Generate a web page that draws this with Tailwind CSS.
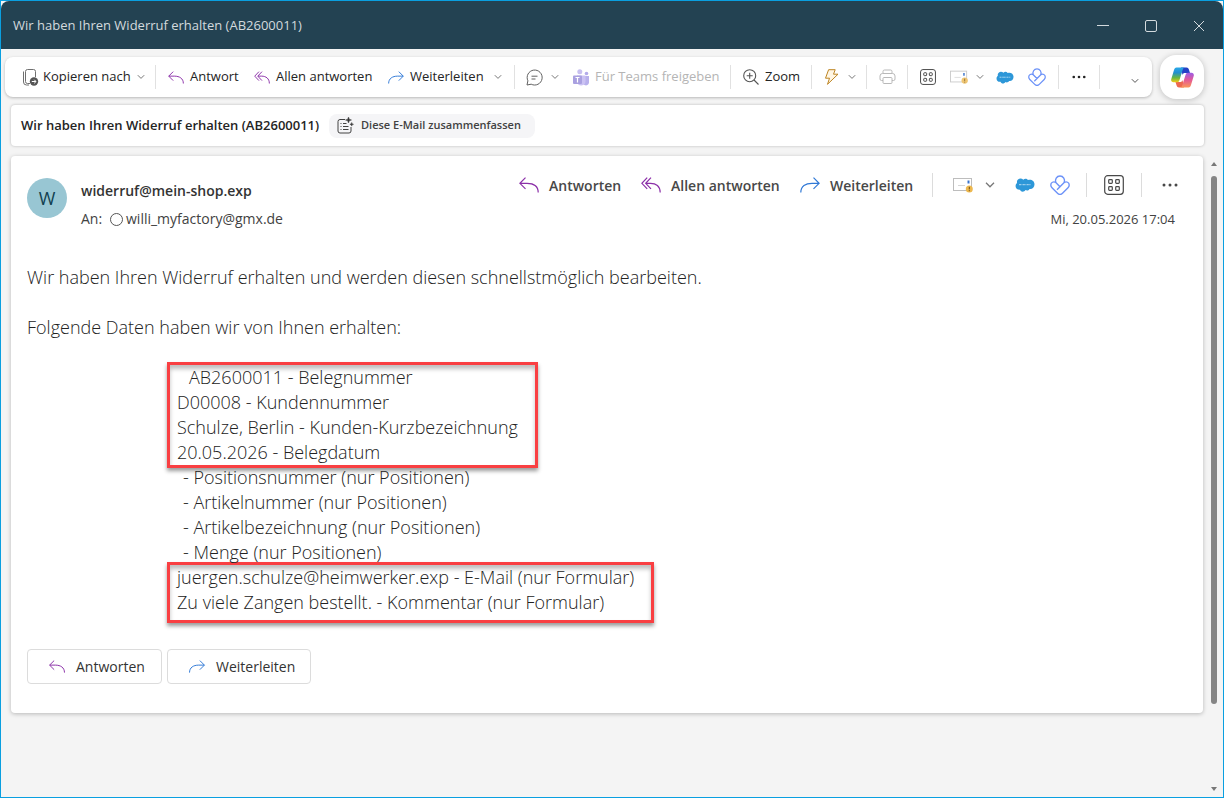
<!DOCTYPE html>
<html lang="de">
<head>
<meta charset="utf-8">
<title>Wir haben Ihren Widerruf erhalten (AB2600011)</title>
<script src="https://cdn.jsdelivr.net/npm/@tailwindcss/browser@4"></script>
</head>
<body class="flex h-screen flex-col overflow-hidden border border-[#0a9fe0] bg-[#f4f4f4] font-['Open_Sans','Noto_Sans',sans-serif] text-[13px] text-[#242424]">
<svg class="hidden" aria-hidden="true">
  <defs>
    <symbol id="chev" viewBox="0 0 8 8"><path d="M.8 2.200 4 5.400l3.200-3.200" fill="none" stroke="currentColor"/></symbol>
    <symbol id="reply" viewBox="0 0 20 16"><path d="M6.500.7.9 6.300l5.600 5.600M1 6.300h7c6.500 0 11.200 3 11.200 9.200" fill="none" stroke="#8b2fa8" stroke-width="1.200"/></symbol>
    <symbol id="replyall" viewBox="0 0 20 16"><path d="M6.200.7.9 6.300l5.300 5.600M10 .7 4.700 6.300 10 11.900M5 6.300h4.500c5.500 0 9.700 3 9.700 9.200" fill="none" stroke="#8b2fa8" stroke-width="1.200"/></symbol>
    <symbol id="fwd" viewBox="0 0 20 16"><path d="M13.500.7l5.600 5.600-5.600 5.600M19 6.300h-7C5.500 6.300.8 9.300.8 15.500" fill="none" stroke="#2f78d6" stroke-width="1.200"/></symbol>
    <symbol id="grid" viewBox="0 0 20 20"><g fill="none" stroke="currentColor" stroke-width="1.200"><rect x=".7" y=".7" width="18.600" height="18.600" rx="3"/><rect x="4.700" y="4.700" width="3.600" height="3.600" rx=".8"/><rect x="11.700" y="4.700" width="3.600" height="3.600" rx=".8"/><rect x="4.700" y="11.700" width="3.600" height="3.600" rx=".8"/><rect x="11.700" y="11.700" width="3.600" height="3.600" rx=".8"/></g></symbol>
    <symbol id="mail" viewBox="0 0 20 16"><rect x=".5" y="1.500" width="18" height="12" fill="#fff" stroke="#bdbdbd"/><path d="M5 8.500h7" stroke="#d5d5d5"/><path d="M14.500 3.500h2v3h-2z" fill="#3973cc"/><circle cx="16.300" cy="12" r="3.500" fill="#edb84f"/><path d="M16.300 9.800v2.600M16.300 13.200v1" stroke="#6b4b10"/></symbol>
    <symbol id="cloud" viewBox="0 0 20 14"><path d="M8.300 1.700c1.500-1.500 3.500-1.200 4.700.4 2.700-1.300 6.500.4 6.500 4.200 0 3.500-2.700 5.200-5 4.600-.9 1.700-2.600 1.900-4 1.200-1.300 2.300-4.700 2.200-5.500-.3C2.500 12.200.5 10.200.6 8.100c0-1.300.6-2.300 1.500-3C.9 1.500 5.500-1.200 8.300 1.700z" fill="#2d97d8"/><path d="M4 6.700h12" stroke="#b5dcf3" stroke-dasharray="2 .5 1 .4"/></symbol>
    <symbol id="clover" viewBox="0 0 20 20"><g fill="none" stroke="#6c92f8" stroke-width="1.400" stroke-linejoin="round"><path d="M5.800 7.500C4.700 4.400 6.600 1 10 1s5.300 3.400 4.200 6.500"/><path d="M10 11.700 5.800 7.500C3.500 6 .8 7.500.8 10c0 1.200.5 2 1.200 2.700l5.500 5.500c1.500 1.500 3.500 1.500 5 0l5.500-5.500c.7-.7 1.200-1.500 1.200-2.700 0-2.500-2.700-4-5-2.500L7 14.700"/></g></symbol>
    <symbol id="dots" viewBox="0 0 16 4"><g fill="currentColor"><circle cx="2" cy="2" r="1.500"/><circle cx="8" cy="2" r="1.500"/><circle cx="14" cy="2" r="1.500"/></g></symbol>
  </defs>
</svg>

<header class="flex h-12 shrink-0 items-center justify-between rounded-t-lg bg-[#234252] pr-[18px] pl-3 text-[#d3dade]">
  <h1 class="pt-0.5 text-[13px]">Wir haben Ihren Widerruf erhalten (AB2600011)</h1>
  <div class="flex items-center gap-9 pt-0.5">
    <button class="size-3" aria-label="Minimieren"><svg class="size-3" viewBox="0 0 12 12"><path d="M0 5.500h12" stroke="currentColor"/></svg></button>
    <button class="size-3" aria-label="Maximieren"><svg class="size-3" viewBox="0 0 12 12"><rect x=".5" y=".5" width="11" height="11" rx="1.500" fill="none" stroke="currentColor"/></svg></button>
    <button class="size-3" aria-label="Schließen"><svg class="size-3" viewBox="0 0 12 12"><path d="M1 1l10 10M11 1 1 11" stroke="currentColor"/></svg></button>
  </div>
</header>

<div class="mt-1.5 mr-[19px] ml-1 flex shrink-0 items-center gap-2">
  <nav class="flex h-10 flex-1 items-center rounded-lg bg-white whitespace-nowrap shadow-[0_1px_3px_rgba(0,0,0,0.25)]" aria-label="Menüband">
    <div class="flex h-6 w-[151px] items-center border-r border-[#e1e1e1] pl-[17px]">
      <button class="flex items-center">
        <svg class="mr-1 size-[17px]" viewBox="0 0 17 17"><g fill="none" stroke="#707070"><path d="M8 14.500H5.500a2 2 0 0 1-2-2v-10a2 2 0 0 1 2-2h6a2 2 0 0 1 2 2V8"/><path d="M1.500 2.500v10.500a3 3 0 0 0 3 3H7"/></g><circle cx="12" cy="12.500" r="4.200" fill="#555"/><path d="M9.800 12.500h4M12.200 10.700l1.800 1.800-1.800 1.800" fill="none" stroke="#fff"/></svg>
        <span class="w-[94px] text-left">Kopieren nach</span>
        <svg class="size-2 text-[#777]"><use href="#chev"/></svg>
      </button>
    </div>
    <div class="flex h-6 w-[359px] items-center border-r border-[#e1e1e1] pl-3">
      <button class="flex w-[86px] items-center gap-1.5"><svg class="h-[13px] w-4"><use href="#reply"/></svg>Antwort</button>
      <button class="flex w-[134px] items-center gap-1.5"><svg class="h-[13px] w-4"><use href="#replyall"/></svg>Allen antworten</button>
      <button class="flex items-center"><svg class="mr-1.5 h-[13px] w-4"><use href="#fwd"/></svg><span class="w-[84px] text-left">Weiterleiten</span><svg class="size-2 text-[#777]"><use href="#chev"/></svg></button>
    </div>
    <div class="flex h-6 w-[216px] items-center border-r border-[#e1e1e1] pl-[11px]">
      <button class="mr-3.5 flex items-center gap-2" aria-label="Chat">
        <svg class="size-[17px]" viewBox="0 0 17 17" fill="none" stroke="#616161"><path d="M1 16l.9-4.200A7.500 7.500 0 1 1 5.200 15.200zM5.500 7.200h6M5.500 10h4"/></svg>
        <svg class="size-2 text-[#777]"><use href="#chev"/></svg>
      </button>
      <button class="flex items-center gap-[5px] text-[#b5b5b5]" disabled>
        <svg class="size-[17px]" viewBox="0 0 17 17"><circle cx="6.800" cy="2.800" r="2.500" fill="#c8c0f0"/><circle cx="13.500" cy="4.500" r="1.800" fill="#b3abea"/><path d="M10 7h6v6.500a3 3 0 0 1-4.500 2.500L10 15z" fill="#b8b0ec"/><path d="M4 6.500h8.500v6A4.300 4.300 0 0 1 4 13z" fill="#cbc2f3"/><rect y="6.500" width="9" height="8.500" rx="1" fill="#a9a0e0"/><path d="M2.500 8.500h4M4.500 8.500v5" stroke="#fff" stroke-width="1.200"/></svg>
        Für Teams freigeben
      </button>
    </div>
    <div class="flex h-6 w-[81px] items-center border-r border-[#e1e1e1] pl-3">
      <button class="flex items-center gap-1.5"><svg class="size-4" viewBox="0 0 16 16" fill="none" stroke="#555" stroke-width="1.100"><circle cx="6.700" cy="6.700" r="6"/><path d="M3.700 6.700h6M6.700 3.700v6M11 11l4.500 4.500"/></svg>Zoom</button>
    </div>
    <div class="flex h-6 w-[55px] items-center border-r border-[#e1e1e1] pl-3">
      <button class="flex items-center gap-2" aria-label="QuickSteps"><svg class="h-4 w-4" viewBox="0 0 16 16" fill="#fff6e4" stroke="#bd8422" stroke-linejoin="round"><path d="M4.600.7h6.600L9.500 5.200H14L3.500 15.300l2-6.100H1.500z"/></svg><svg class="size-2 text-[#777]"><use href="#chev"/></svg></button>
    </div>
    <div class="flex h-6 w-[41px] items-center justify-center border-r border-[#e1e1e1]">
      <button disabled aria-label="Drucken"><svg class="h-4 w-[17px]" viewBox="0 0 17 16" fill="none" stroke="#b9b9b9"><path d="M4 4.500v-2a1.500 1.500 0 0 1 1.500-1.500h6A1.500 1.500 0 0 1 13 2.500v2M4 11.500H2.500a1.500 1.500 0 0 1-1.500-1.500V7a2.500 2.500 0 0 1 2.500-2.500h10A2.500 2.500 0 0 1 16 7v3a1.500 1.500 0 0 1-1.500 1.500H13"/><rect x="4" y="8.500" width="9" height="6" rx="1"/></svg></button>
    </div>
    <div class="flex h-6 w-[151px] items-center border-r border-[#e1e1e1] pl-3">
      <button class="mr-3.5 text-[#444]" aria-label="Apps"><svg class="size-4"><use href="#grid"/></svg></button>
      <button class="mr-3 flex items-center gap-2" aria-label="Nachrichtentyp"><svg class="h-4 w-[18px] opacity-80"><use href="#mail"/></svg><svg class="size-2 text-[#777]"><use href="#chev"/></svg></button>
      <button class="mr-3.5" aria-label="Salesforce"><svg class="h-[13px] w-[18px]"><use href="#cloud"/></svg></button>
      <button aria-label="Add-in"><svg class="size-[18px]"><use href="#clover"/></svg></button>
    </div>
    <div class="flex h-6 w-[41px] items-center justify-center border-r border-[#e1e1e1]">
      <button aria-label="Mehr"><svg class="h-1 w-3.5"><use href="#dots"/></svg></button>
    </div>
    <button class="mt-2 mr-[13px] ml-auto" aria-label="Menüband erweitern"><svg class="size-2 text-[#555]"><use href="#chev"/></svg></button>
  </nav>
  <button class="flex size-11 items-center justify-center rounded-2xl bg-white shadow-[0_1px_6px_rgba(0,0,0,0.22)]" aria-label="Copilot">
    <svg class="h-[21px] w-[23px]" viewBox="0 0 23 21">
      <defs>
        <linearGradient id="cpA" x1="0" y1="0" x2="0" y2="1"><stop offset="0" stop-color="#2aa9e8"/><stop offset=".35" stop-color="#228fd0"/><stop offset=".7" stop-color="#6ab83f"/><stop offset="1" stop-color="#f7cc17"/></linearGradient>
        <linearGradient id="cpB" x1="0" y1="0" x2="0" y2="1"><stop offset="0" stop-color="#9a5ce8"/><stop offset=".5" stop-color="#e55a95"/><stop offset="1" stop-color="#fb9657"/></linearGradient>
      </defs>
      <path d="M10 .5h5.500c1.300 0 2 .8 2.400 2L19 6h-5c-1.500 0-2 .5-2.500 2z" fill="#2541c5"/><path d="M13 20.500H8c-1.300 0-2-.7-2.400-2L4.500 15H9c1.500 0 2-.6 2.500-2z" fill="#ec6850"/><path d="M5.500.5H14c-1.200 0-1.800.8-2.200 2L8.500 13c-.5 1.500-1.200 2.300-2.500 2.300H2.500C.5 15.300-.2 13.600.3 12L3 3C3.500 1.500 4 .5 5.500.5z" fill="url(#cpA)"/><path d="M17.500 20.500H9c1.200 0 1.800-.8 2.200-2L14.500 8c.5-1.500 1.200-2.300 2.500-2.300h3.500c2 0 2.700 1.700 2.200 3.300L20 18c-.5 1.500-1 2.500-2.500 2.500z" fill="url(#cpB)"/>
    </svg>
  </button>
</div>

<section class="mt-1.5 mr-[19px] ml-2.5 flex h-[41px] shrink-0 items-center gap-2 rounded bg-white pl-2.5 shadow-[0_0_3px_rgba(0,0,0,0.25)]">
  <h2 class="w-[300px] text-[13px] font-semibold whitespace-nowrap">Wir haben Ihren Widerruf erhalten (AB2600011)</h2>
  <button class="flex h-6 w-[206px] items-center gap-[7px] rounded-lg bg-[#f5f5f7] pl-2 text-[11px] font-semibold whitespace-nowrap text-[#424242]">
    <svg class="size-[17px]" viewBox="0 0 17 17" fill="none" stroke="#424242"><path d="M8 2.500H3a2 2 0 0 0-2 2v9.500a2 2 0 0 0 2 2h9a2 2 0 0 0 2-2v-4M6 6.500h3.500M6 9.500h5.500M6 12.500h5.500M3.500 6.500h1M3.500 9.500h1M3.500 12.500h1"/><path d="M11.500 0l.8 2.200 2.200.8-2.200.8-.8 2.200-.8-2.200L8.500 3l2.200-.8zM14.700 5.500l.5 1.300 1.300.5-1.300.5-.5 1.300-.5-1.300-1.300-.5 1.300-.5z" fill="#333" stroke-width=".5"/></svg>
    Diese E-Mail zusammenfassen
  </button>
</section>

<div class="mt-2.5 flex min-h-0 flex-1">
  <main class="ml-2.5 flex-1 self-start rounded bg-white px-4 pb-[29px] shadow-[0_1px_4px_rgba(0,0,0,0.25)]">
    <div class="flex pt-[15px]">
      <div class="mt-[7px] mr-3.5 flex size-10 shrink-0 items-center justify-center rounded-full bg-[#98c6d3] text-[18px] text-[#103f50]">W</div>
      <div class="pt-2.5">
        <p class="text-[14px] leading-5 font-semibold text-[#333]">widerruf@mein-shop.exp</p>
        <p class="mt-2 flex items-center text-[14px] leading-5 text-[#424242]"><span class="w-[29px]">An:</span><span class="mr-[3px] size-[13px] rounded-full border border-[#555]"></span>willi_myfactory@gmx.de</p>
      </div>
      <div class="ml-auto">
        <div class="flex h-7 items-center pr-[9px] text-[14px] font-semibold whitespace-nowrap text-[#484848]">
          <button class="flex w-[122px] items-center gap-2.5"><svg class="h-4 w-5"><use href="#reply"/></svg>Antworten</button>
          <button class="flex w-[159px] items-center gap-2.5"><svg class="h-4 w-5"><use href="#replyall"/></svg>Allen antworten</button>
          <button class="flex w-[132px] items-center gap-2.5"><svg class="h-4 w-5"><use href="#fwd"/></svg>Weiterleiten</button>
          <span class="mr-5 h-6 w-px bg-[#dcdcdc]"></span>
          <button class="mr-5 flex items-center gap-3" aria-label="Nachrichtentyp"><svg class="h-4 w-5"><use href="#mail"/></svg><svg class="size-2.5 text-[#777]"><use href="#chev"/></svg></button>
          <button class="mr-[15px]" aria-label="Salesforce"><svg class="h-3.5 w-5"><use href="#cloud"/></svg></button>
          <button class="mr-4" aria-label="Add-in"><svg class="size-5"><use href="#clover"/></svg></button>
          <span class="mr-[17px] h-6 w-px bg-[#dcdcdc]"></span>
          <button class="mr-[17px]" aria-label="Apps"><svg class="size-5"><use href="#grid"/></svg></button>
          <span class="mr-5 h-6 w-px bg-[#dcdcdc]"></span>
          <button aria-label="Mehr"><svg class="h-1 w-4"><use href="#dots"/></svg></button>
        </div>
        <p class="mt-2.5 pr-3 text-right text-[13px] leading-5 text-[#424242]">Mi, 20.05.2026 17:04</p>
      </div>
    </div>

    <article class="mt-9 text-[18px] leading-[25px] font-[350] whitespace-nowrap text-[#222]">
      <p>Wir haben Ihren Widerruf erhalten und werden diesen schnellstmöglich bearbeiten.</p>
      <p class="mt-[25px]">Folgende Daten haben wir von Ihnen erhalten:</p>
      <div class="mt-[22px] ml-[140px]">
        <div class="w-[371px] border-3 border-[#f93f42] pl-[7px] shadow-[0_3px_4px_rgba(0,0,0,0.4),inset_0_4px_4px_rgba(0,0,0,0.25)]">
          <p class="pl-3">AB2600011 - Belegnummer</p>
          <p>D00008 - Kundennummer</p>
          <p>Schulze, Berlin - Kunden-Kurzbezeichnung</p>
          <p>20.05.2026 - Belegdatum</p>
        </div>
        <div class="-my-[3px] pl-4">
          <p>- Positionsnummer (nur Positionen)</p>
          <p>- Artikelnummer (nur Positionen)</p>
          <p>- Artikelbezeichnung (nur Positionen)</p>
          <p>- Menge (nur Positionen)</p>
        </div>
        <div class="w-[487px] border-3 border-[#f93f42] pb-[5px] pl-[7px] shadow-[0_3px_4px_rgba(0,0,0,0.4),inset_0_4px_4px_rgba(0,0,0,0.25)]">
          <p>juergen.schulze@heimwerker.exp - E-Mail (nur Formular)</p>
          <p>Zu viele Zangen bestellt. - Kommentar (nur Formular)</p>
        </div>
      </div>
    </article>

    <div class="mt-[26px] flex gap-[5px] text-[14px] text-[#333]">
      <button class="flex h-[35px] w-[135px] items-center gap-2.5 rounded border border-[#dcdcdc] pl-5"><svg class="h-[13px] w-[18px]"><use href="#reply"/></svg>Antworten</button>
      <button class="flex h-[35px] w-36 items-center gap-2.5 rounded border border-[#dcdcdc] pl-5"><svg class="h-[13px] w-[18px]"><use href="#fwd"/></svg>Weiterleiten</button>
    </div>
  </main>
  <div class="flex w-5 flex-col items-center pt-1.5 pb-1.5 pl-0.5 text-[#777]">
    <svg class="h-1 w-1.5" viewBox="0 0 6 4"><path d="M0 4 3 0l3 4z" fill="currentColor"/></svg>
    <div class="mt-2.5 h-[528px] w-[6px] rounded-full bg-[#858585]"></div>
    <svg class="mt-auto h-1 w-1.5" viewBox="0 0 6 4"><path d="M0 0l3 4 3-4z" fill="currentColor"/></svg>
  </div>
</div>
</body>
</html>
